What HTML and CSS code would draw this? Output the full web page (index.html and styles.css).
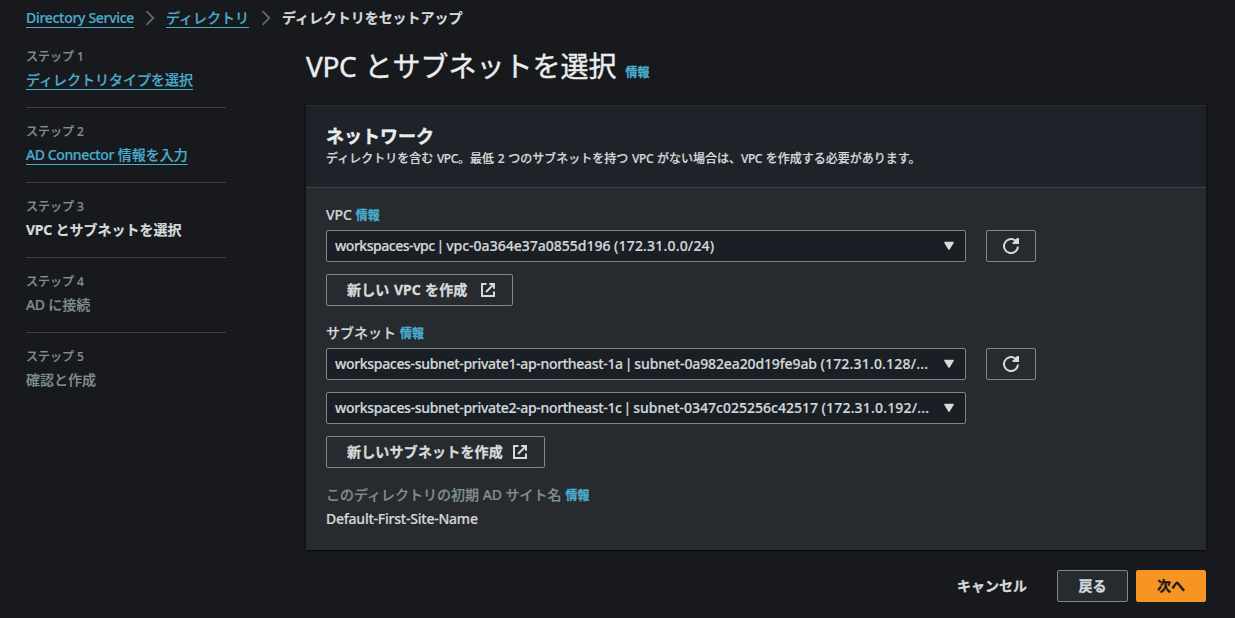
FILE: index.html
```html
<!DOCTYPE html>
<html lang="ja">
<head>
<meta charset="utf-8">
<title>ディレクトリをセットアップ</title>
<link rel="stylesheet" href="styles.css">
</head>
<body>
<nav class="breadcrumbs">
  <a class="link crumb-service">Directory Service</a>
  <svg class="chevron" viewBox="0 0 10 16"><path d="M1.5 1.2 8.3 8 1.5 14.8"/></svg>
  <a class="link crumb-directory">ディレクトリ</a>
  <svg class="chevron" viewBox="0 0 10 16"><path d="M1.5 1.2 8.3 8 1.5 14.8"/></svg>
  <span class="crumb-current">ディレクトリをセットアップ</span>
</nav>
<div class="layout">
  <aside class="steps">
    <div class="step"><div class="step-label">ステップ 1</div><div class="step-title"><a class="link">ディレクトリタイプを選択</a></div></div>
    <div class="step"><div class="step-label">ステップ 2</div><div class="step-title"><a class="link"><span class="latin">AD Connector</span> 情報を入力</a></div></div>
    <div class="step"><div class="step-label">ステップ 3</div><div class="step-title current"><span class="latin-bold">VPC</span> とサブネットを選択</div></div>
    <div class="step"><div class="step-label">ステップ 4</div><div class="step-title"><span class="latin">AD</span> に接続</div></div>
    <div class="step"><div class="step-label">ステップ 5</div><div class="step-title">確認と作成</div></div>
  </aside>
  <main class="content">
    <h1 class="title"><span class="title-latin">VPC</span> とサブネットを選択<a class="info info-title">情報</a></h1>
    <section class="panel">
      <header class="panel-header">
        <h2 class="panel-title">ネットワーク</h2>
        <p class="panel-desc">ディレクトリを含む <span class="latin">VPC</span>。最低 2 つのサブネットを持つ <span class="latin">VPC</span> がない場合は、<span class="latin">VPC</span> を作成する必要があります。</p>
      </header>
      <div class="panel-body">
        <div class="label"><span class="label-latin">VPC</span><a class="info">情報</a></div>
        <div class="row">
          <div class="select"><span class="select-text"><span class="vpc-name">workspaces-vpc</span> <span class="bar">|</span> <span class="vpc-id">vpc-0a364e37a0855d196</span> <span class="cidr">(172.31.0.0/24)</span></span><svg class="caret" viewBox="0 0 12 10"><path d="M2 1.5h8L6 8z"/></svg></div>
          <button class="btn refresh"><svg class="icon" viewBox="0 0 16 16"><path d="M15 8.6A7 7 0 1 1 12.4 2.6L14 4.4"/><path d="M15 0v5H9.6M14.5 1 11.5 4.5"/></svg></button>
        </div>
        <button class="btn create create-vpc"><span class="create-text">新しい <span class="btn-latin">VPC</span> を作成</span><svg class="icon" viewBox="0 0 16 16"><path d="M6.5 2H2v12h12V9.5"/><path d="M9.2 2H14v4.8M14 2 6 10"/></svg></button>
        <div class="label">サブネット<a class="info">情報</a></div>
        <div class="row">
          <div class="select"><span class="select-text"><span class="subnet-name">workspaces-subnet-private1-ap-northeast-1a</span> <span class="bar">|</span> <span class="subnet-id">subnet-0a982ea20d19fe9ab</span> <span class="cidr">(172.31.0.128/...</span></span><svg class="caret" viewBox="0 0 12 10"><path d="M2 1.5h8L6 8z"/></svg></div>
          <button class="btn refresh"><svg class="icon" viewBox="0 0 16 16"><path d="M15 8.6A7 7 0 1 1 12.4 2.6L14 4.4"/><path d="M15 0v5H9.6M14.5 1 11.5 4.5"/></svg></button>
        </div>
        <div class="row">
          <div class="select"><span class="select-text"><span class="subnet-name">workspaces-subnet-private2-ap-northeast-1c</span> <span class="bar">|</span> <span class="subnet-id subnet-id-wide">subnet-0347c025256c42517</span> <span class="cidr">(172.31.0.192/...</span></span><svg class="caret" viewBox="0 0 12 10"><path d="M2 1.5h8L6 8z"/></svg></div>
        </div>
        <button class="btn create create-subnet"><span class="create-text">新しいサブネットを作成</span><svg class="icon" viewBox="0 0 16 16"><path d="M6.5 2H2v12h12V9.5"/><path d="M9.2 2H14v4.8M14 2 6 10"/></svg></button>
        <div class="label muted">このディレクトリの初期 <span class="label-latin">AD</span> サイト名<a class="info">情報</a></div>
        <div class="value">Default-First-Site-Name</div>
      </div>
    </section>
    <footer class="actions">
      <button class="btn plain">キャンセル</button>
      <button class="btn back">戻る</button>
      <button class="btn primary">次へ</button>
    </footer>
  </main>
</div>
</body>
</html>
```
FILE: styles.css
```css
* { box-sizing: border-box; }
body {
  margin: 0;
  width: 1235px;
  height: 618px;
  overflow: hidden;
  background: #17191d;
  color: #d3d8d8;
  font: 500 14px/20px "Noto Sans", "Noto Sans CJK JP", sans-serif;
  -webkit-text-stroke: 0.2px currentColor;
  white-space: nowrap;
}
h1, h2, p { margin: 0; }
.link {
  color: #4aaccb;
  text-decoration: underline;
  text-decoration-thickness: 1px;
  text-underline-offset: 4px;
}
.latin { letter-spacing: -0.4px; }
.latin-bold { letter-spacing: -0.3px; }
.label-latin { letter-spacing: -0.1px; }
.btn-latin { letter-spacing: 0; }
.breadcrumbs {
  display: flex;
  align-items: center;
  height: 33px;
  padding: 3px 0 0 26px;
}
.crumb-service { letter-spacing: -0.3px; width: 108px; }
.crumb-directory { width: 84px; }
.crumb-current { font-weight: 700; letter-spacing: -0.05px; }
.chevron { width: 10px; height: 16px; margin: 0 11px; fill: none; stroke: #5f666e; stroke-width: 1.8; }
.layout { display: flex; gap: 80px; padding-left: 26px; }
.steps { width: 200px; color: #7f8f90; }
.step { padding: 16px 0 15px; border-bottom: 1px solid #3d4045; }
.step:last-child { border-bottom: 0; }
.step-label { font-size: 12px; line-height: 16px; margin-bottom: 3px; }
.step-title { line-height: 24px; }
.current { color: #d5dbdb; font-weight: 700; }
.content { width: 900px; }
.title {
  height: 44px;
  margin: 11px 0 17px;
  font-size: 28px;
  line-height: 44px;
  font-weight: 400;
  color: #eaeded;
  word-spacing: 1px;
  -webkit-text-stroke-width: 0.4px;
}
.title-latin { letter-spacing: -0.4px; }
.info {
  margin-left: 4px;
  color: #4aaccb;
  font-size: 12px;
  line-height: 16px;
  font-weight: 700;
  letter-spacing: 0;
  -webkit-text-stroke-width: 0.3px;
}
.info-title { margin-left: 9px; }
.panel {
  height: 445px;
  background: #272a2e;
  border-top: 1px solid #2b2e33;
  box-shadow: 0 1px 1px #0b0c0e, 1px 0 1px #101114, -1px 0 1px #101114;
}
.panel-header {
  height: 82px;
  padding: 18px 20px 0;
  background: #1f2229;
  border-bottom: 1px solid #3d4045;
}
.panel-title { font-size: 18px; line-height: 24px; font-weight: 700; color: #eaeded; -webkit-text-stroke-width: 0.4px; }
.panel-desc { margin-top: 2px; font-size: 12px; line-height: 18px; word-spacing: 0.6px; }
.panel-body { padding: 17px 20px 0; }
.label { height: 20px; margin-bottom: 5px; }
.row { display: flex; gap: 20px; margin-bottom: 12px; }
.select {
  display: flex;
  align-items: center;
  justify-content: space-between;
  width: 640px;
  height: 32px;
  padding: 0 10px 0 8px;
  border: 1px solid #7b8989;
  border-radius: 2px;
  background: #1a1e25;
}
.select-text { letter-spacing: -0.1px; }
.bar { margin: 0 -1.6px; }
.vpc-name { letter-spacing: -0.47px; }
.vpc-id { letter-spacing: 0; }
.subnet-name { letter-spacing: -0.32px; }
.subnet-id { letter-spacing: -0.12px; }
.subnet-id-wide { letter-spacing: 0; }
.cidr { letter-spacing: 0.18px; }
.caret { width: 12px; height: 10px; fill: #d5dbdb; stroke: #d5dbdb; stroke-width: 1.6; stroke-linejoin: round; }
.btn {
  display: flex;
  align-items: center;
  justify-content: center;
  height: 32px;
  padding: 0;
  border: 1px solid #7b8989;
  border-radius: 2px;
  background: transparent;
  color: #d5dbdb;
  font: inherit;
  font-weight: 700;
  -webkit-text-stroke: 0.3px currentColor;
}
.icon { width: 16px; height: 16px; fill: none; stroke: #d5dbdb; stroke-width: 2; }
.refresh { width: 50px; }
.create { justify-content: space-between; padding: 0 16px 0 20px; margin-bottom: 17px; }
.create-text { letter-spacing: 0.18px; word-spacing: 0.5px; }
.create-vpc { width: 187px; }
.create-subnet { width: 219px; }
.muted { color: #7f8f90; margin-bottom: 4px; }
.value { letter-spacing: -0.23px; }
.actions { display: flex; justify-content: flex-end; margin-top: 20px; }
.plain { width: 70px; margin-right: 30px; border: 0; }
.back { width: 71px; margin-right: 8px; background: #272a2e; }
.primary { width: 70px; border-color: #f89424; background: #f89424; color: #17191d; }
```
